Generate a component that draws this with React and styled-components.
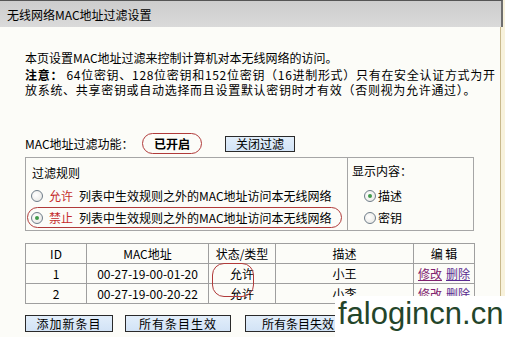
import React from "react";
import styled, { createGlobalStyle } from "styled-components";

const Global = createGlobalStyle`
  html, body { margin: 0; padding: 0; }
  body {
    width: 505px; height: 337px; overflow: hidden;
    background: #f8f2dc;
    font-family: "Noto Sans CJK SC", "Noto Sans", sans-serif;
    font-size: 12px; color: #000;
  }
`;

const Page = styled.div`
  position: relative;
  width: 505px;
  height: 337px;
  overflow: hidden;
`;

const Panel = styled.div`
  width: 500px;
  height: 337px;
  background: #fcfcf8;
  border-right: 1px solid #c9b98c;
`;

const TitleBar = styled.div`
  height: 26px;
  border-top: 1px solid #555;
  border-right: 2px solid #6e6e6e;
  margin-right: -3px;
  background: linear-gradient(#cdcdcd, #dadada);
  padding-left: 7px;
  display: flex;
  align-items: center;
  line-height: 15px;
`;

const Content = styled.div`
  padding: 23px 0 0 25px;
`;

const Para = styled.div`
  line-height: 15px;
  white-space: nowrap;
`;

const Note = styled(Para)`
  margin-top: 2px;
  letter-spacing: 0.7px;
  b { font-weight: 700; }
`;

const SwitchRow = styled.div`
  margin-top: 36px;
  height: 21px;
  display: flex;
  align-items: center;
`;

const SwitchLabel = styled.span`
  width: 117px;
`;

const StateOval = styled.span`
  width: 58px;
  height: 19px;
  border: 1px solid #b03a3a;
  border-radius: 11px;
  display: flex;
  align-items: center;
  justify-content: center;
  font-weight: 700;
`;

const Btn = styled.button`
  font-family: inherit;
  font-size: 12px;
  line-height: 13px;
  color: #000;
  padding: 0;
  width: ${(p) => p.$w}px;
  height: ${(p) => p.$h || 17}px;
  margin-left: ${(p) => p.$ml || 0}px;
  background: linear-gradient(#e2eefa, #d2e3f6);
  border: 1px solid #2a2a2a;
  border-radius: 0;
  letter-spacing: ${(p) => p.$ls || 0}px;
`;

const RuleBox = styled.div`
  margin-top: 3px;
  width: 447px;
  height: 72px;
  border: 1px solid #a6a6a6;
  display: grid;
  grid-template-columns: 321px 1fr;
`;

const RuleCol = styled.div`
  padding: ${(p) => p.$pt}px 0 0 ${(p) => p.$pl}px;
  border-left: ${(p) => (p.$divided ? "1px solid #a6a6a6" : "none")};
  display: flex;
  flex-direction: column;
  align-items: flex-start;
`;

const ColHead = styled.div`
  line-height: 15px;
  margin-bottom: ${(p) => p.$mb}px;
  padding-left: ${(p) => p.$pl || 0}px;
`;

const RadioRow = styled.div`
  height: 19px;
  margin-top: ${(p) => p.$mt || 0}px;
  padding: 0 9px 0 ${(p) => p.$pl || 3}px;
  border: 1px solid ${(p) => (p.$circled ? "#b03a3a" : "transparent")};
  border-radius: 11px;
  display: flex;
  align-items: center;
  white-space: nowrap;
`;

const Radio = styled.span`
  width: 10px;
  height: 10px;
  border-radius: 50%;
  border: 1px solid #6f7d8a;
  background: radial-gradient(circle at 40% 40%, #ffffff, #e4e4e0);
  display: flex;
  align-items: center;
  justify-content: center;
  margin-right: ${(p) => p.$gap}px;
  &::after {
    content: "";
    width: 4px;
    height: 4px;
    border-radius: 50%;
    background: ${(p) => (p.$on ? "#3f9a4a" : "transparent")};
  }
`;

const Red = styled.span`
  color: #c42b2b;
  margin-right: 6px;
`;

const TableWrap = styled.div`
  position: relative;
  margin-top: 12px;
  width: 449px;
`;

const Table = styled.table`
  border-collapse: collapse;
  width: 449px;
  table-layout: fixed;
  td {
    height: 19px;
    padding: 0;
    border: 1px solid #9f9f9f;
    text-align: center;
    line-height: 15px;
    white-space: nowrap;
  }
`;

const Link = styled.a`
  color: ${(p) => p.$c};
  text-decoration: underline;
  margin: 0 2px;
`;

const StatusOval = styled.div`
  position: absolute;
  left: 187px;
  top: 20px;
  width: 40px;
  height: 32px;
  border: 1px solid #b03a3a;
  border-radius: 12px;
  pointer-events: none;
`;

const ButtonRow = styled.div`
  margin-top: 11px;
  display: flex;
`;

const Watermark = styled.div`
  position: absolute;
  left: 335px;
  top: 296px;
  width: 170px;
  height: 41px;
  background: #fff;
  color: #24452a;
  font-family: "Liberation Sans", sans-serif;
  font-size: 31px;
  line-height: 34px;
  padding: 1px 0 0 3px;
  box-sizing: border-box;
  white-space: nowrap;
`;

const rows = [
  { id: 1, mac: "00-27-19-00-01-20", desc: "小王" },
  { id: 2, mac: "00-27-19-00-20-22", desc: "小李" },
];

export default function App() {
  return (
    <Page>
      <Global />
      <Panel>
        <TitleBar>无线网络MAC地址过滤设置</TitleBar>
        <Content>
          <Para>本页设置MAC地址过滤来控制计算机对本无线网络的访问。</Para>
          <Note>
            <b>注意：</b> 64位密钥、128位密钥和152位密钥（16进制形式）只有在安全认证方式为开
            <br />
            放系统、共享密钥或自动选择而且设置默认密钥时才有效（否则视为允许通过）。
          </Note>
          <SwitchRow>
            <SwitchLabel>MAC地址过滤功能：</SwitchLabel>
            <StateOval>已开启</StateOval>
            <Btn $w={70} $h={16} $ml={23}>关闭过滤</Btn>
          </SwitchRow>
          <RuleBox>
            <RuleCol $pt={7} $pl={1}>
              <ColHead $mb={5} $pl={5}>过滤规则</ColHead>
              <RadioRow>
                <Radio $gap={6} />
                <Red>允许</Red>列表中生效规则之外的MAC地址访问本无线网络
              </RadioRow>
              <RadioRow $circled $mt={1}>
                <Radio $gap={6} $on />
                <Red>禁止</Red>列表中生效规则之外的MAC地址访问本无线网络
              </RadioRow>
            </RuleCol>
            <RuleCol $divided $pt={5} $pl={4}>
              <ColHead $mb={7}>显示内容：</ColHead>
              <RadioRow $pl={11}>
                <Radio $gap={2} $on />描述
              </RadioRow>
              <RadioRow $pl={11} $mt={1}>
                <Radio $gap={2} />密钥
              </RadioRow>
            </RuleCol>
          </RuleBox>
          <TableWrap>
            <Table>
              <colgroup>
                <col style={{ width: 61 }} />
                <col style={{ width: 122 }} />
                <col style={{ width: 67 }} />
                <col style={{ width: 138 }} />
                <col style={{ width: 61 }} />
              </colgroup>
              <tbody>
                <tr>
                  <td>ID</td>
                  <td>MAC地址</td>
                  <td>状态/类型</td>
                  <td>描述</td>
                  <td>编 辑</td>
                </tr>
                {rows.map((r) => (
                  <tr key={r.id}>
                    <td>{r.id}</td>
                    <td>{r.mac}</td>
                    <td>允许</td>
                    <td>{r.desc}</td>
                    <td>
                      <Link $c="#80206e">修改</Link>
                      <Link $c="#5a2a90">删除</Link>
                    </td>
                  </tr>
                ))}
              </tbody>
            </Table>
            <StatusOval />
          </TableWrap>
          <ButtonRow>
            <Btn $w={88} $ls={1}>添加新条目</Btn>
            <Btn $w={106} $ml={12} $ls={1}>所有条目生效</Btn>
            <Btn $w={106} $ml={14}>所有条目失效</Btn>
          </ButtonRow>
        </Content>
      </Panel>
      <Watermark>falogincn.cn</Watermark>
    </Page>
  );
}
